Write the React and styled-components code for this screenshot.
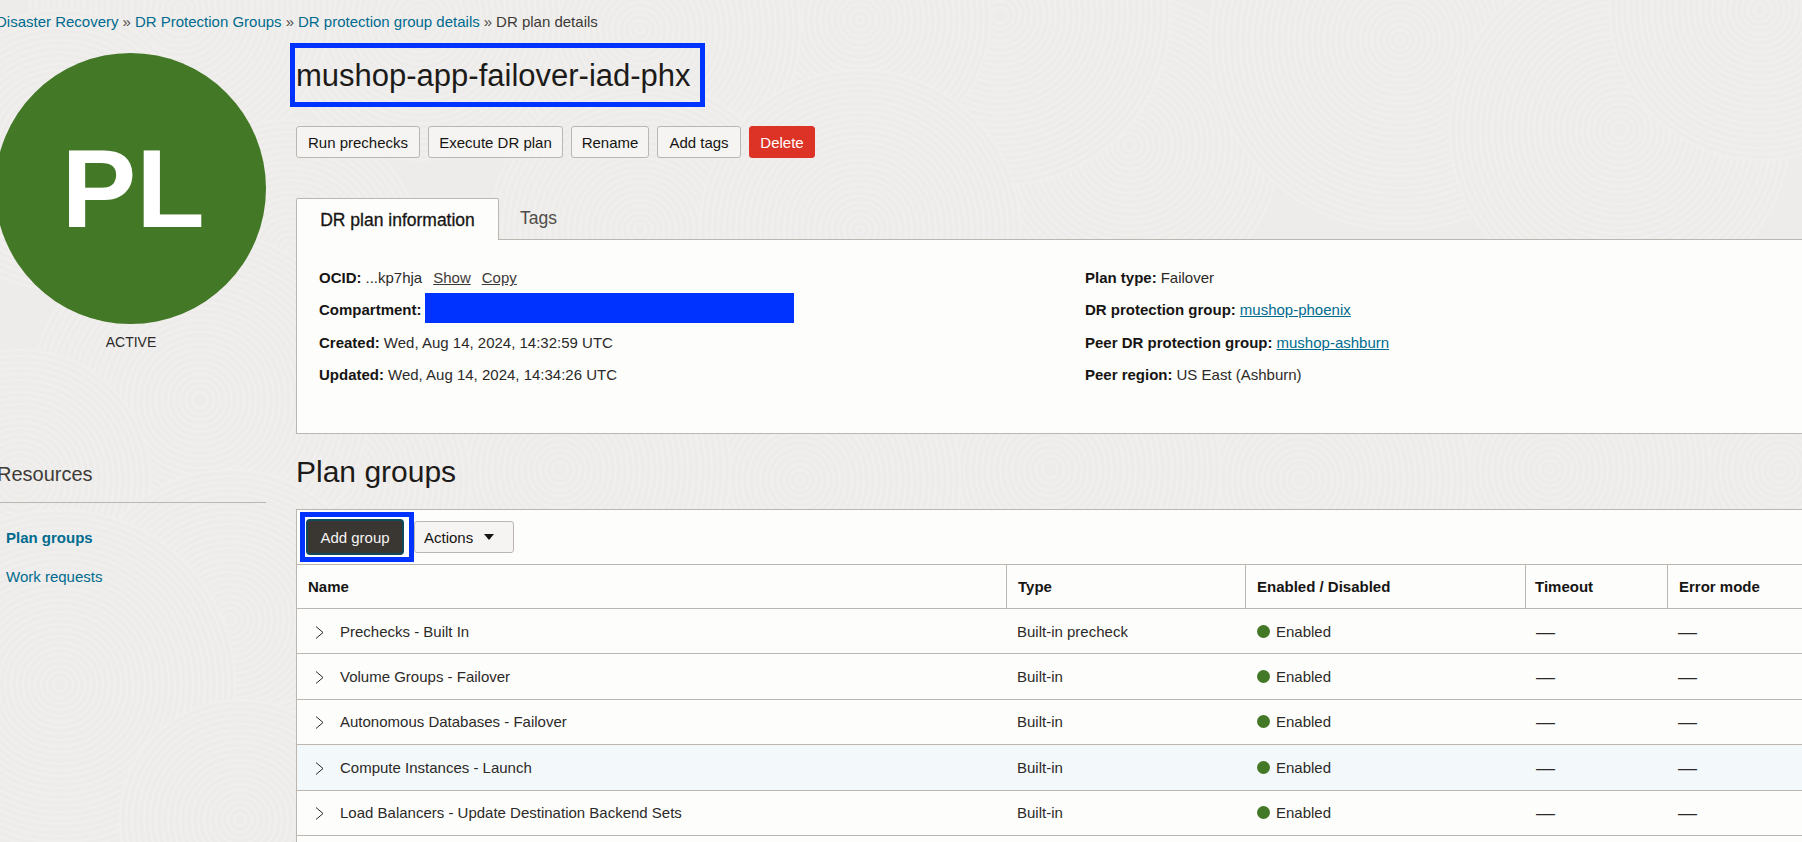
import React from 'react';
import styled, { createGlobalStyle, css } from 'styled-components';

const INK = '#161513';
const LINE = '#bcb6b1';
const LINK = '#006b8f';
const BLUE = '#0033ff';
const GREEN = '#437826';
const PAPER = '#fdfdfc';

// swirl texture of the console background: overlapping discs of concentric rings
const swirlCentres = [
  [1780, 470, 150], [1550, 470, 160], [1300, 480, 170], [1050, 470, 170], [800, 480, 160], [560, 470, 170], [330, 480, 140],
  [1130, 145, 150], [1000, 15, 170], [860, 20, 130], [1400, 40, 190], [1620, 130, 170], [1760, 10, 150],
  [640, 30, 160], [420, 20, 140], [180, 10, 150], [60, 150, 140], [640, 230, 150], [860, 230, 160], [290, 250, 130],
  [200, 400, 170], [20, 480, 130], [230, 620, 150], [340, 820, 130], [60, 685, 175], [240, 820, 120],
];

function buildTexture() {
  const bg = '#edecea';
  let rings = '';
  swirlCentres.forEach(([x, y, r]) => {
    rings += `<circle cx="${x}" cy="${y}" r="${r}" fill="${bg}"/>`;
    for (let i = r; i > 3; i -= 6) {
      rings += `<circle cx="${x}" cy="${y}" r="${i}" fill="none" stroke="#f0efed" stroke-width="2.5"/>`;
    }
  });
  const svg = `<svg xmlns="http://www.w3.org/2000/svg" width="1802" height="842"><rect width="1802" height="842" fill="${bg}"/>${rings}</svg>`;
  return `data:image/svg+xml,${encodeURIComponent(svg)}`;
}

const GlobalStyle = createGlobalStyle`
  html, body {
    margin: 0;
    height: 100%;
    overflow: hidden;
    background: #edecea;
  }
  * {
    box-sizing: border-box;
  }
`;

const Page = styled.div`
  width: 1802px;
  height: 842px;
  overflow: hidden;
  padding-top: 12px;
  background-image: url("${buildTexture()}");
  font-family: "Liberation Sans", Arial, sans-serif;
  font-size: 15px;
  color: ${INK};
`;

const Breadcrumb = styled.nav`
  display: flex;
  align-items: center;
  gap: 4px;
  height: 20px;
  margin-left: -4px;
  line-height: 20px;
  color: #3d3a37;
`;

const Crumb = styled.span`
  color: ${LINK};
`;

const Separator = styled.span`
  color: #4f4c49;
`;

const Body = styled.div`
  display: grid;
  grid-template-columns: 296px 1506px;
  margin-top: 11px;
`;

const Sidebar = styled.aside`
  display: flex;
  flex-direction: column;
  padding-top: 10px;
`;

const Avatar = styled.div`
  display: flex;
  align-items: center;
  justify-content: center;
  width: 271px;
  height: 271px;
  margin-left: -5px;
  border-radius: 50%;
  background: ${GREEN};
  color: #fff;
  font-size: 112px;
  font-weight: 700;
  padding-left: 5px;
`;

const Status = styled.div`
  width: 262px;
  margin-top: 10px;
  text-align: center;
  font-size: 14px;
  line-height: 16px;
  color: #2c2a28;
`;

const ResourcesTitle = styled.h3`
  margin: 110px 0 0 -3px;
  height: 28px;
  font-size: 20px;
  font-weight: 400;
  line-height: 28px;
  color: #3d3a37;
`;

const SidebarRule = styled.hr`
  width: 266px;
  height: 1px;
  margin: 14px 0 0;
  border: 0;
  background: ${LINE};
`;

const SideLinks = styled.ul`
  display: flex;
  flex-direction: column;
  gap: 19px;
  margin: 25px 0 0;
  padding: 0 0 0 6px;
  list-style: none;
`;

const SideLink = styled.li`
  height: 20px;
  line-height: 20px;
  color: ${LINK};
  font-weight: ${(p) => (p.$active ? 700 : 400)};
`;

const Main = styled.main`
  display: flex;
  flex-direction: column;
  align-items: flex-start;
  min-width: 0;
`;

const TitleBox = styled.div`
  margin-left: -6px;
  width: 415px;
  height: 64px;
  padding-left: 1px;
  border: 5px solid ${BLUE};
  font-size: 31px;
  line-height: 56px;
  color: #1d1b19;
  white-space: nowrap;
`;

const Buttons = styled.div`
  display: flex;
  gap: 8px;
  margin-top: 19px;
`;

const buttonBase = css`
  display: inline-flex;
  align-items: center;
  justify-content: center;
  height: 32px;
  border: 1px solid ${LINE};
  border-radius: 3px;
  background: #f5f4f2;
  font: inherit;
  color: ${INK};
  padding: 0;
`;

const Button = styled.button`
  ${buttonBase}
  width: ${(p) => p.$width}px;
  ${(p) => p.$danger && css`
    border-color: #dd3327;
    background: #dd3327;
    color: #fff;
  `}
`;

const Tabs = styled.div`
  display: flex;
  margin-top: 40px;
  height: 41px;
`;

const ActiveTab = styled.div`
  width: 203px;
  height: 42px;
  border: 1px solid ${LINE};
  border-bottom: 0;
  border-radius: 2px 2px 0 0;
  background: ${PAPER};
  position: relative;
  z-index: 1;
  text-align: center;
  font-size: 17.5px;
  line-height: 42px;
  -webkit-text-stroke: 0.3px ${INK};
`;

const Tab = styled.div`
  padding-left: 21px;
  font-size: 17.5px;
  line-height: 40px;
  color: #4f4c49;
`;

const InfoPanel = styled.section`
  display: grid;
  grid-template-columns: 766px 1fr;
  width: 100%;
  height: 195px;
  padding: 21.5px 0 0 22px;
  border: 1px solid ${LINE};
  border-right: 0;
  background: ${PAPER};
`;

const InfoColumn = styled.div`
  display: flex;
  flex-direction: column;
`;

const InfoRow = styled.div`
  display: flex;
  align-items: center;
  gap: 4px;
  height: 32.3px;
  color: #2c2a28;
`;

const Label = styled.b`
  font-weight: 700;
  color: ${INK};
`;

const Action = styled.a`
  margin-left: 7px;
  color: #3d3a37;
  text-decoration: underline;
`;

const InfoLink = styled.a`
  color: ${LINK};
  text-decoration: underline;
`;

const Redacted = styled.span`
  width: 369px;
  height: 30px;
  margin: -4px 0 0 -1px;
  background: ${BLUE};
`;

const SectionTitle = styled.h2`
  margin: 20px 0 0 0;
  height: 36px;
  font-size: 30px;
  font-weight: 400;
  line-height: 36px;
  color: #1d1b19;
`;

const Card = styled.section`
  width: 100%;
  height: 400px;
  margin-top: 19px;
  border: 1px solid ${LINE};
  border-right: 0;
  border-bottom: 0;
  background: ${PAPER};
`;

const Toolbar = styled.div`
  display: flex;
  align-items: center;
  height: 55px;
  padding-left: 3px;
  border-bottom: 1px solid ${LINE};
`;

const Highlight = styled.div`
  display: flex;
  align-items: center;
  width: 114px;
  height: 50px;
  padding-left: 1px;
  border: 5px solid ${BLUE};
  background: #fff;
`;

const PrimaryButton = styled.button`
  ${buttonBase}
  width: 98px;
  height: 36px;
  border: 2px solid #0f4a5c;
  border-radius: 4px;
  background: #3a3632;
  color: #f5f4f2;
`;

const MenuButton = styled.button`
  ${buttonBase}
  justify-content: flex-start;
  gap: 11px;
  width: 100px;
  padding-left: 9px;
`;

const Caret = styled.span`
  width: 0;
  height: 0;
  border-left: 5.5px solid transparent;
  border-right: 5.5px solid transparent;
  border-top: 6px solid ${INK};
`;

const tableColumns = '709px 239px 280px 142px 1fr';

const HeaderRow = styled.div`
  display: grid;
  grid-template-columns: ${tableColumns};
  height: 44px;
  border-bottom: 1px solid ${LINE};
`;

const HeaderCell = styled.div`
  display: flex;
  align-items: center;
  padding-left: ${(p) => p.$pad || 11}px;
  border-left: ${(p) => (p.$first ? '0' : `1px solid ${LINE}`)};
  font-weight: 700;
`;

const Row = styled.div`
  display: grid;
  grid-template-columns: ${tableColumns};
  height: 45.4px;
  border-bottom: 1px solid ${LINE};
  background: ${(p) => (p.$hover ? '#f3f8fb' : 'transparent')};
  color: #2c2a28;
`;

const Cell = styled.div`
  display: flex;
  align-items: center;
  padding-left: 11px;
`;

const NameCell = styled(Cell)`
  gap: 16px;
  padding-left: 18px;
`;

const Chevron = styled.svg`
  width: 9px;
  height: 13px;
  margin-top: 2px;
  flex: none;
  fill: none;
  stroke: #2c2a28;
  stroke-width: 1;
`;

const Dot = styled.span`
  width: 13px;
  height: 13px;
  margin: 0 6px 0 1px;
  border-radius: 50%;
  background: ${GREEN};
`;

const Dash = styled.span`
  font-size: 19px;
  line-height: 1;
`;

const groups = [
  { name: 'Prechecks - Built In', type: 'Built-in precheck' },
  { name: 'Volume Groups - Failover', type: 'Built-in' },
  { name: 'Autonomous Databases - Failover', type: 'Built-in' },
  { name: 'Compute Instances - Launch', type: 'Built-in', hover: true },
  { name: 'Load Balancers - Update Destination Backend Sets', type: 'Built-in' },
];

export default function App() {
  return (
    <Page>
      <GlobalStyle />
      <Breadcrumb>
        <Crumb>Disaster Recovery</Crumb>
        <Separator>»</Separator>
        <Crumb>DR Protection Groups</Crumb>
        <Separator>»</Separator>
        <Crumb>DR protection group details</Crumb>
        <Separator>»</Separator>
        <span>DR plan details</span>
      </Breadcrumb>
      <Body>
        <Sidebar>
          <Avatar>PL</Avatar>
          <Status>ACTIVE</Status>
          <ResourcesTitle>Resources</ResourcesTitle>
          <SidebarRule />
          <SideLinks>
            <SideLink $active>Plan groups</SideLink>
            <SideLink>Work requests</SideLink>
          </SideLinks>
        </Sidebar>
        <Main>
          <TitleBox>mushop-app-failover-iad-phx</TitleBox>
          <Buttons>
            <Button $width={124}>Run prechecks</Button>
            <Button $width={135}>Execute DR plan</Button>
            <Button $width={78}>Rename</Button>
            <Button $width={84}>Add tags</Button>
            <Button $width={66} $danger>Delete</Button>
          </Buttons>
          <Tabs>
            <ActiveTab>DR plan information</ActiveTab>
            <Tab>Tags</Tab>
          </Tabs>
          <InfoPanel>
            <InfoColumn>
              <InfoRow><Label>OCID:</Label> ...kp7hja <Action>Show</Action> <Action>Copy</Action></InfoRow>
              <InfoRow><Label>Compartment:</Label><Redacted /></InfoRow>
              <InfoRow><Label>Created:</Label> Wed, Aug 14, 2024, 14:32:59 UTC</InfoRow>
              <InfoRow><Label>Updated:</Label> Wed, Aug 14, 2024, 14:34:26 UTC</InfoRow>
            </InfoColumn>
            <InfoColumn>
              <InfoRow><Label>Plan type:</Label> Failover</InfoRow>
              <InfoRow><Label>DR protection group:</Label> <InfoLink>mushop-phoenix</InfoLink></InfoRow>
              <InfoRow><Label>Peer DR protection group:</Label> <InfoLink>mushop-ashburn</InfoLink></InfoRow>
              <InfoRow><Label>Peer region:</Label> US East (Ashburn)</InfoRow>
            </InfoColumn>
          </InfoPanel>
          <SectionTitle>Plan groups</SectionTitle>
          <Card>
            <Toolbar>
              <Highlight><PrimaryButton>Add group</PrimaryButton></Highlight>
              <MenuButton>Actions <Caret /></MenuButton>
            </Toolbar>
            <HeaderRow>
              <HeaderCell $first>Name</HeaderCell>
              <HeaderCell>Type</HeaderCell>
              <HeaderCell>Enabled / Disabled</HeaderCell>
              <HeaderCell $pad={9}>Timeout</HeaderCell>
              <HeaderCell>Error mode</HeaderCell>
            </HeaderRow>
            {groups.map((g) => (
              <Row key={g.name} $hover={g.hover}>
                <NameCell>
                  <Chevron viewBox="0 0 9 13"><path d="M1 0.5 L8 6.5 L1 12.5" /></Chevron>
                  {g.name}
                </NameCell>
                <Cell>{g.type}</Cell>
                <Cell><Dot />Enabled</Cell>
                <Cell><Dash>—</Dash></Cell>
                <Cell><Dash>—</Dash></Cell>
              </Row>
            ))}
          </Card>
        </Main>
      </Body>
    </Page>
  );
}
